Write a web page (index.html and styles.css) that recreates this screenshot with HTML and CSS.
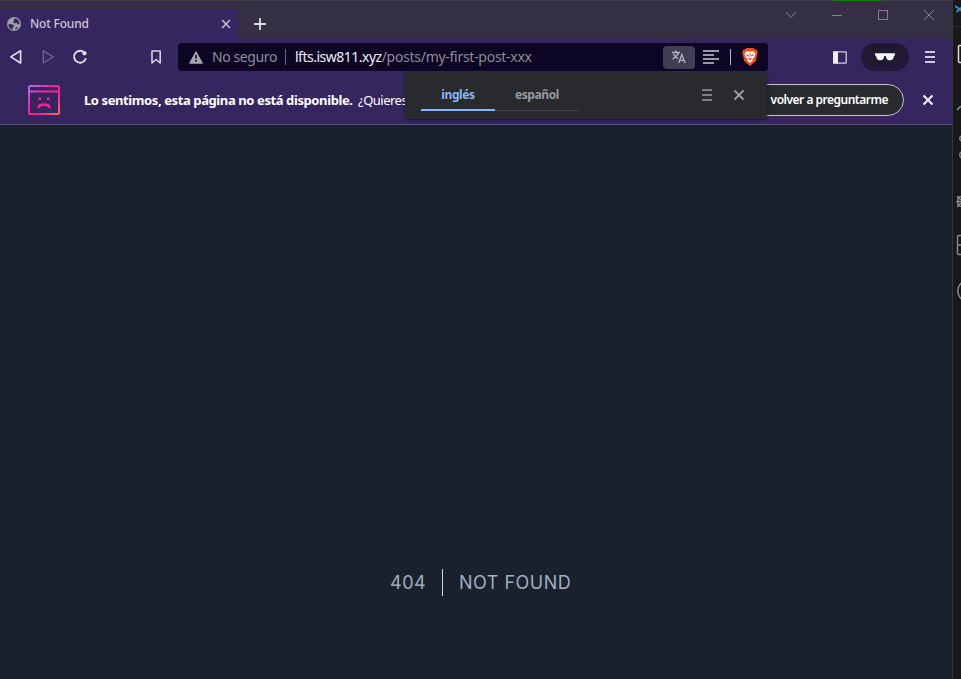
FILE: index.html
```
<!DOCTYPE html>
<html lang="es">
<head>
<meta charset="utf-8">
<title>Not Found</title>
<link rel="stylesheet" href="styles.css">
</head>
<body>
<div class="desktop">
  <div class="browser">
    <header class="tabstrip">
      <div class="tab">
        <svg class="globe" width="14" height="14" viewBox="0 0 14 14"><circle cx="7" cy="7" r="7" fill="#9ba0a5"/><path d="M1.500 7 4.500 7.300 6.500 8 7 9.500 5.500 10.500 5.200 12.800C2.600 12 1.300 9.500 1.500 7ZM8.200 1.500C6.500 2 6 3.400 7 4.200L6 5.500 8 6.300 10 6 11 7.500 12.600 7.200C12.600 4 10.600 1.700 8.200 1.500ZM8 12.700 9 10.500 11 10C10.500 11.500 9.500 12.400 8 12.700Z" fill="#35265f"/></svg>
        <span class="tab-title">Not Found</span>
        <svg class="tab-close" width="10" height="10" viewBox="0 0 10 10"><path d="M1 1 9 9M9 1 1 9" stroke="#c6c0d4" stroke-width="1.500"/></svg>
      </div>
      <svg class="new-tab" width="12" height="12" viewBox="0 0 12 12"><path d="M6 0V12M0 6H12" stroke="#dddce1" stroke-width="1.800"/></svg>
      <div class="window-buttons">
        <svg width="12" height="12" viewBox="0 0 12 12"><path d="M1 3 6 8.500 11 3" fill="none" stroke="#85818f"/></svg>
        <svg width="12" height="12" viewBox="0 0 12 12"><path d="M1 6.500H11" stroke="#85818f"/></svg>
        <svg width="12" height="12" viewBox="0 0 12 12"><rect x="1.500" y="1.500" width="9" height="9" fill="none" stroke="#85818f"/></svg>
        <svg width="12" height="12" viewBox="0 0 12 12"><path d="M1 1 11 11M11 1 1 11" stroke="#85818f"/></svg>
      </div>
    </header>
    <nav class="toolbar">
      <svg class="back" width="14" height="16" viewBox="0 0 14 16"><path d="M11.600 1.800V14L1.800 7.900Z" fill="none" stroke="#e4e1ea" stroke-width="1.600" stroke-linejoin="round"/></svg>
      <svg class="forward" width="14" height="16" viewBox="0 0 14 16"><path d="M2.400 1.800V14L12.200 7.900Z" fill="none" stroke="#6c6189" stroke-width="1.400" stroke-linejoin="round"/></svg>
      <svg class="reload" width="16" height="16" viewBox="0 0 16 16"><path d="M12.800 4A6 6 0 1 0 13.900 9.300" fill="none" stroke="#e4e1ea" stroke-width="1.800"/><circle cx="12.500" cy="4.300" r="2.100" fill="#e4e1ea"/></svg>
      <svg class="bookmark" width="12" height="16" viewBox="0 0 12 16"><path d="M2 2H10.200V14L6.100 10.500 2 14Z" fill="none" stroke="#d5d0df" stroke-width="1.600" stroke-linejoin="round"/></svg>
      <div class="address">
        <svg class="warning" width="14" height="13" viewBox="0 0 14 13"><path d="M7 1 13 12H1Z" fill="#a5a6ac" stroke="#a5a6ac" stroke-width="1.500" stroke-linejoin="round"/><path d="M7 4V7.500M7 9V10.800" stroke="#0c0523" stroke-width="1.600"/></svg>
        <span class="secure">No seguro</span>
        <span class="address-rule"></span>
        <span class="url"><b>lfts.isw811.xyz</b><span>/posts/my-first-post-xxx</span></span>
        <span class="translate"><svg width="16" height="16" viewBox="0 0 16 16"><path d="M1 3.500H9M5 1.500V3.500M7.500 3.500Q6.500 7 1.500 10M2.500 5Q4 8.300 7 9.600M7.600 14 10.800 5.600 14 14M8.700 11.300H12.900" fill="none" stroke="#b7b4bf" stroke-width="1.300"/></svg></span>
        <svg class="reader" width="16" height="14" viewBox="0 0 16 14"><path d="M0 1H16M0 5H11M0 9H16M0 13H11" stroke="#9c99a6" stroke-width="1.800"/></svg>
        <span class="shield-rule"></span>
        <svg class="brave" width="16" height="18" viewBox="0 0 16 18"><path d="M4.500 0H11.500L13 1.500 14.500 1.600 15.800 4 15.300 6 13.900 13 8 18 2.100 13 .700 6 .2 4 1.500 1.600 3 1.500Z" fill="#fb4b17"/><path d="M4.600 3 8 3.700 11.400 3 13.500 5.700 12.500 9 10.300 11.200 10.700 12.800 8 15 5.300 12.800 5.700 11.200 3.500 9 2.500 5.700Z" fill="#fff"/><path d="M4.200 6.300 7 7 6.500 8.500 5 8ZM11.800 6.300 9 7 9.500 8.500 11 8ZM6 10.600 8 9.900 10 10.600 8 12.500ZM7.500 5H8.500L8.300 9.500H7.700Z" fill="#fb4b17"/></svg>
      </div>
      <svg class="sidebar-icon" width="14" height="13" viewBox="0 0 14 13"><rect x=".8" y=".8" width="12.400" height="11.400" rx=".5" fill="none" stroke="#d4cfdd" stroke-width="1.300"/><path d="M0 .500H5V12.500H0Z" fill="#f0edf3"/></svg>
      <div class="private"><svg width="20" height="8" viewBox="0 0 20 8"><path d="M0 .3H20V2.300L19 3 18.200 5.500Q17.400 7.300 15.600 7.300H14Q12.200 7.300 11.500 5.500L10.700 3H9.300L8.500 5.500Q7.800 7.300 6 7.300H4.400Q2.600 7.300 1.800 5.500L1 3 0 2.300Z" fill="#f4f2f5"/></svg></div>
      <svg class="menu" width="10" height="12" viewBox="0 0 10 12"><path d="M0 1H10M0 6H10M0 11H10" stroke="#d0cbdc" stroke-width="1.900"/></svg>
    </nav>
    <section class="infobar">
      <svg class="sad" width="34" height="32" viewBox="0 0 34 32"><defs><linearGradient id="sad-color" x1="0" y1="0" x2="34" y2="32" gradientUnits="userSpaceOnUse"><stop stop-color="#a778ff"/><stop offset=".4" stop-color="#ff1ba1"/><stop offset=".65" stop-color="#ff1f91"/><stop offset="1" stop-color="#ff7a45"/></linearGradient></defs><g fill="none" stroke="url(#sad-color)" stroke-width="2"><rect x="2" y="2" width="30" height="28" rx="1.500"/><path d="M2 7.500H32"/><path d="M11.500 23C13 19.600 21 19.600 22.500 23" stroke-width="2.500" stroke-linecap="round"/></g><path d="M11.500 13.500H14V16H11.500ZM20 13.500H22.500V16H20Z" fill="#ff1ba1"/></svg>
      <p class="message"><b>Lo sentimos, esta página no está disponible.</b><span>¿Quieres</span></p>
      <button class="dismiss">volver a preguntarme</button>
      <svg class="info-close" width="10" height="10" viewBox="0 0 10 10"><path d="M.5.5 9.500 9.500M9.500.5.5 9.500" stroke="#ece9f1" stroke-width="2.200"/></svg>
    </section>
    <main class="page">
      <div class="error"><span class="code">404</span><span class="reason">NOT FOUND</span></div>
    </main>
    <div class="popup">
      <div class="language selected"><span>inglés</span></div>
      <div class="language"><span>español</span></div>
      <svg class="options" width="10" height="12" viewBox="0 0 10 12"><path d="M0 1H10M0 6H10M0 11H10" stroke="#999a9d" stroke-width="1.700"/></svg>
      <svg class="popup-close" width="10" height="10" viewBox="0 0 10 10"><path d="M.5.5 9.500 9.500M9.500.5.5 9.500" stroke="#a4a5a9" stroke-width="1.900"/></svg>
    </div>
    <span class="top-accent"></span>
  </div>
  <aside class="behind">
    <svg width="8" height="679" viewBox="0 0 8 679" fill="none"><path d="M0 26.500H8" stroke="#2c2c2c"/><path d="M2 6 8 10V8L3.500 12" stroke="#2494da" stroke-width="2"/><path d="M9 45.500H6.500Q5.500 45.500 5.500 46.500V61.500Q5.500 62.500 6.500 62.500H9" stroke="#dedede" stroke-width="1.500"/><path d="M4 110 8 106" stroke="#7f8597" stroke-width="1.700"/><path d="M8 136Q5.500 138.500 8 141M8 152Q5.500 155 8 158" stroke="#7d7c9f" stroke-width="1.500"/><path d="M8 196.500 5 198V205L8 206.500M3 201.500H8M4 196 8 200M4 207 8 203" stroke="#8b8b8b" stroke-width="1.400"/><path d="M9 235.500H6Q4.500 235.500 4.500 237V253Q4.500 254.500 6 254.500H9M5 245H8" stroke="#8b8b8b" stroke-width="1.400"/><path d="M8 283Q1.500 291 8 299" stroke="#858585" stroke-width="1.500"/></svg>
  </aside>
</div>
</body>
</html>
```
FILE: styles.css
```
* { box-sizing: border-box; }
body { margin: 0; background: #181818; font-family: "Noto Sans", "Open Sans", sans-serif; overflow: hidden; }
svg { display: block; flex: none; }
span, b { white-space: nowrap; }
.desktop { display: flex; width: 961px; height: 679px; }
.browser { position: relative; display: flex; flex-direction: column; width: 953px; border-top: 1px solid #42404b; border-right: 1px solid #363636; background: #35265f; }
.behind { width: 8px; overflow: hidden; background: #181818; }
.tabstrip { display: flex; height: 38px; background: #342f43; }
.tab { display: flex; align-items: center; width: 238px; height: 30px; margin-top: 8px; padding-left: 7px; background: #35265f; }
.tab-title { width: 61px; margin-left: 9px; color: #cac4d7; font-size: 12px; font-weight: 500; line-height: 16px; letter-spacing: -.2px; }
.tab-close { margin-left: 130px; margin-right: 7px; }
.new-tab { margin: 17px 0 0 16px; }
.window-buttons { display: flex; gap: 34px; margin: 8px 17px 0 auto; }
.toolbar { display: flex; align-items: center; height: 36px; padding-left: 9px; }
.forward { margin-left: 18px; }
.reload { margin-left: 17px; }
.bookmark { margin-left: 62px; }
.address { display: flex; align-items: center; width: 590px; height: 28px; margin-left: 16px; padding-left: 11px; border-radius: 4px; background: #0c0523; color: #8f8c98; font-size: 14px; letter-spacing: -.28px; }
.secure { width: 66px; margin-left: 9px; letter-spacing: -.4px; }
.secure, .url { padding-bottom: 1px; }
.address-rule { width: 1px; height: 16px; margin-left: 7px; background: #68647a; }
.url { width: 368px; margin-left: 9px; }
.url b { color: #f0eff3; font-weight: 400; letter-spacing: -.5px; }
.translate { display: flex; align-items: center; justify-content: center; width: 32px; height: 23px; border-radius: 4px; background: #433d54; }
.reader { margin-left: 8px; }
.shield-rule { width: 1px; height: 16px; margin-left: 11px; background: #b9b5c2; }
.brave { margin-left: 11px; }
.sidebar-icon { margin-left: 65px; }
.private { display: flex; align-items: center; justify-content: center; width: 48px; height: 28px; margin-left: 14px; border-radius: 14px; background: #1f1934; }
.menu { margin-left: 16px; }
.infobar { display: flex; align-items: center; height: 50px; padding: 1px 0 0 27px; border-bottom: 1px solid #5b4e82; }
.message { display: flex; width: 420px; margin: 0 0 0 23px; color: #fff; font-size: 13px; line-height: 20px; letter-spacing: -.5px; }
.message b { width: 274px; font-weight: 700; letter-spacing: -.4px; }
.message span { width: 60px; }
.dismiss { width: 204px; height: 32px; margin-left: 196px; padding: 0 15px 1px 0; border: 1px solid #c4c2ca; border-radius: 16px; background: #292a2d; color: #fff; font: 600 12px "Noto Sans", "Open Sans", sans-serif; letter-spacing: -.5px; text-align: right; white-space: nowrap; }
.info-close { margin-left: 19px; }
.page { flex: 1; padding: 444px 0 0 390px; background: #1b212c; }
.error { display: flex; color: #a0aec0; font: 18px/27px Inter, sans-serif; letter-spacing: .5px; }
.code { width: 53px; border-right: 1px solid #cbd5e0; }
.reason { margin-left: 16px; }
.popup { position: absolute; left: 405px; top: 71px; display: flex; width: 362px; height: 47px; padding-left: 16px; border-radius: 0 0 4px 4px; background: #292a2d; box-shadow: 0 1px 3px #00000080; }
.language { width: 84px; height: 39px; padding-top: 14px; border-bottom: 1px solid #424347; color: #969ba1; font-size: 12px; font-weight: 700; line-height: 17px; letter-spacing: -.4px; text-align: center; }
.selected { width: 74px; border-bottom: 2px solid #8ab4f8; color: #8ab4f8; }
.options { margin: 17px 0 0 123px; }
.popup-close { margin: 18px 0 0 22px; }
.top-accent { position: absolute; left: 833px; top: -1px; width: 48px; height: 1px; background: #147d14; }
```
